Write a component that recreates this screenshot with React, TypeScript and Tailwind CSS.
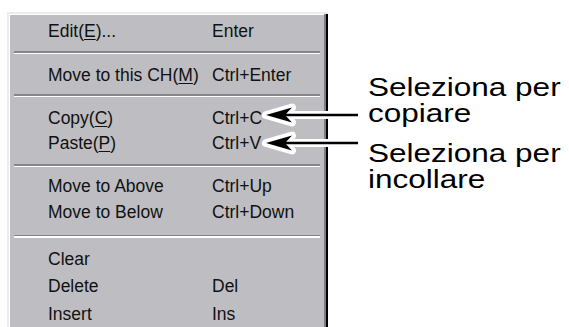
import React from "react";

type Item =
  | { kind: "row"; h: number; pre: string; u?: string; post?: string; sc: string }
  | { kind: "sep"; h: number; off: number };

const items: Item[] = [
  { kind: "row", h: 26, pre: "Edit(", u: "E", post: ")...", sc: "Enter" },
  { kind: "sep", h: 18, off: 7 },
  { kind: "row", h: 26, pre: "Move to this CH(", u: "M", post: ")", sc: "Ctrl+Enter" },
  { kind: "sep", h: 18, off: 6 },
  { kind: "row", h: 25, pre: "Copy(", u: "C", post: ")", sc: "Ctrl+C" },
  { kind: "row", h: 25, pre: "Paste(", u: "P", post: ")", sc: "Ctrl+V" },
  { kind: "sep", h: 18, off: 8 },
  { kind: "row", h: 25.5, pre: "Move to Above", sc: "Ctrl+Up" },
  { kind: "row", h: 25, pre: "Move to Below", sc: "Ctrl+Down" },
  { kind: "sep", h: 21, off: 10 },
  { kind: "row", h: 27.5, pre: "Clear", sc: "" },
  { kind: "row", h: 27.5, pre: "Delete", sc: "Del" },
  { kind: "row", h: 27.5, pre: "Insert", sc: "Ins" },
];

function Arrow({ y }: { y: number }) {
  const head = `M266 ${y} L292 ${y - 7.5} L285 ${y} L292 ${y + 7.5} Z`;
  return (
    <g>
      <path d={head} fill="white" stroke="white" strokeWidth={8} strokeLinejoin="round" />
      <line x1={284} y1={y} x2={358} y2={y} stroke="white" strokeWidth={8} />
      <line x1={284} y1={y} x2={358} y2={y} stroke="black" strokeWidth={2.5} />
      <path d={head} fill="black" />
    </g>
  );
}

export default function App() {
  return (
    <div
      className="relative w-[569px] h-[327px] overflow-hidden bg-white flex"
      style={{ fontFamily: '"Liberation Sans", Arial, sans-serif' }}
    >
      <div className="ml-[7px] mt-[12px] w-[321px] h-[340px] shrink-0 bg-[#bebec2] border-t-[2px] border-l-[2px] border-t-[#ececec] border-l-[#ececec] flex">
        <div className="flex-1 border-t border-l border-white pt-[3px] flex flex-col">
          {items.map((it, i) =>
            it.kind === "sep" ? (
              <div key={i} className="px-[4px]" style={{ height: it.h, paddingTop: it.off }}>
                <div className="h-[1.5px] bg-[#85858a]" />
                <div className="h-[1.5px] bg-white" />
              </div>
            ) : (
              <div
                key={i}
                className="flex pl-[38px] text-[17.5px] text-[#111] whitespace-nowrap"
                style={{ height: it.h, lineHeight: `${it.h}px` }}
              >
                <div className="w-[164px]">
                  {it.pre}
                  {it.u && <span className="underline underline-offset-[2px]">{it.u}</span>}
                  {it.post}
                </div>
                <div>{it.sc}</div>
              </div>
            )
          )}
        </div>
        <div className="w-[2px] bg-[#808080]" />
        <div className="w-[2px] bg-black" />
      </div>

      <div className="ml-[40px] mt-[74px] text-[25px] leading-[26px] text-black whitespace-nowrap">
        <div className="origin-left scale-x-[1.26]">Seleziona per</div>
        <div className="origin-left scale-x-[1.26]">copiare</div>
        <div className="mt-[14px] origin-left scale-x-[1.26]">Seleziona per</div>
        <div className="origin-left scale-x-[1.26]">incollare</div>
      </div>

      <svg className="absolute inset-0 pointer-events-none" width={569} height={327}>
        <Arrow y={115} />
        <Arrow y={143} />
      </svg>
    </div>
  );
}
